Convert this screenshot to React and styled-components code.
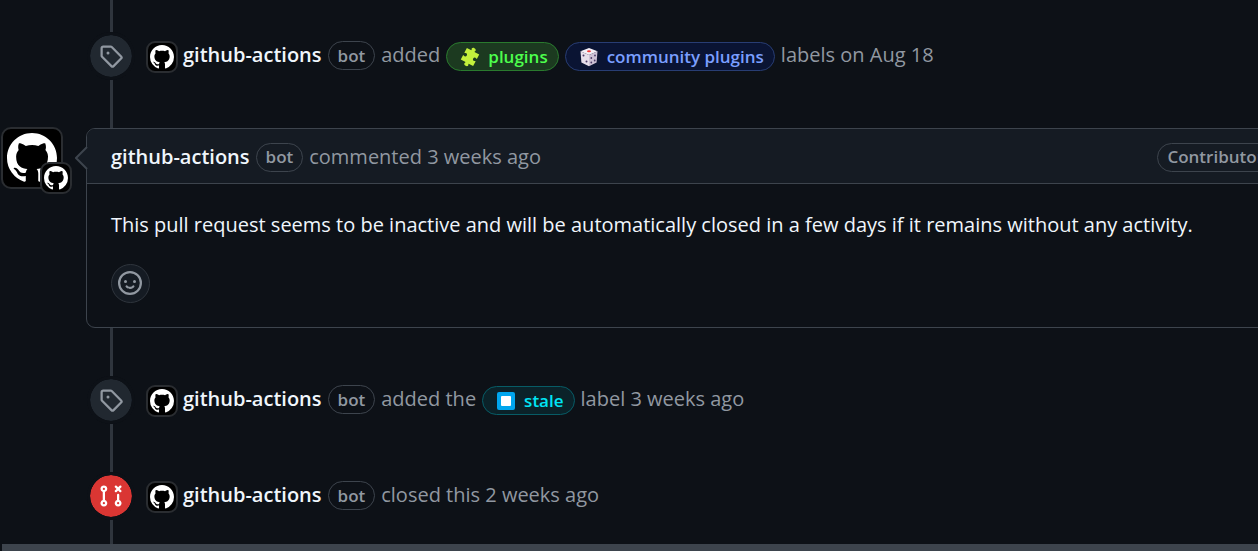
import React from 'react';
import styled, { createGlobalStyle } from 'styled-components';

const GlobalStyle = createGlobalStyle`
  * { box-sizing: border-box; }
  body {
    margin: 0;
    background: #0d1117;
    color: #f0f6fc;
    font: 400 20px/30px "Open Sans", "Noto Sans", sans-serif;
  }
`;

const paths = {
  tag: 'M1 7.775V2.75C1 1.784 1.784 1 2.75 1h5.025c.464 0 .91.184 1.238.513l6.25 6.25a1.75 1.75 0 0 1 0 2.474l-5.026 5.026a1.75 1.75 0 0 1-2.474 0l-6.25-6.25A1.752 1.752 0 0 1 1 7.775Zm1.5 0c0 .066.026.13.073.177l6.25 6.25a.25.25 0 0 0 .354 0l5.025-5.025a.25.25 0 0 0 0-.354l-6.25-6.25a.25.25 0 0 0-.177-.073H2.75a.25.25 0 0 0-.25.25ZM6 5a1 1 0 1 1 0 2 1 1 0 0 1 0-2Z',
  github: 'M8 0c4.42 0 8 3.58 8 8a8.013 8.013 0 0 1-5.45 7.59c-.4.08-.55-.17-.55-.38 0-.27.01-1.13.01-2.2 0-.75-.25-1.23-.54-1.48 1.78-.2 3.65-.88 3.65-3.95 0-.88-.31-1.59-.82-2.15.08-.2.36-1.02-.08-2.12 0 0-.67-.22-2.2.82-.64-.18-1.32-.27-2-.27-.68 0-1.36.09-2 .27-1.53-1.03-2.2-.82-2.2-.82-.44 1.1-.16 1.92-.08 2.12-.51.56-.82 1.28-.82 2.15 0 3.06 1.86 3.75 3.64 3.95-.23.2-.44.55-.51 1.07-.46.21-1.61.55-2.33-.66-.15-.24-.6-.83-1.23-.82-.67.01-.27.38.01.53.34.19.73.9.82 1.13.16.45.68 1.31 2.69.94 0 .67.01 1.3.01 1.49 0 .21-.15.45-.55.38A7.995 7.995 0 0 1 0 8c0-4.42 3.58-8 8-8Z',
  smiley: 'M8 0a8 8 0 1 1 0 16A8 8 0 0 1 8 0ZM1.5 8a6.5 6.5 0 1 0 13 0 6.5 6.5 0 0 0-13 0Zm3.82 1.636a.75.75 0 0 1 1.038.175l.007.009c.103.118.22.222.35.31.264.178.683.37 1.285.37.602 0 1.02-.192 1.285-.371.13-.088.247-.192.35-.31l.007-.008a.75.75 0 0 1 1.222.87c-.2.27-.45.5-.735.673-.63.418-1.37.638-2.127.629-.946 0-1.652-.308-2.126-.63a3.331 3.331 0 0 1-.735-.685.75.75 0 0 1 .183-1.044ZM12 7a1 1 0 1 1-2 0 1 1 0 0 1 2 0ZM5 8a1 1 0 1 1 0-2 1 1 0 0 1 0 2Z',
  closed: 'M3.25 1A2.25 2.25 0 0 1 4 5.372v5.256a2.251 2.251 0 1 1-1.5 0V5.372A2.251 2.251 0 0 1 3.25 1Zm9.5 5.5a.75.75 0 0 1 .75.75v3.378a2.251 2.251 0 1 1-1.5 0V7.25a.75.75 0 0 1 .75-.75Zm-2.03-5.273a.75.75 0 0 1 1.06 0l.97.97.97-.97a.748.748 0 0 1 1.265.332.75.75 0 0 1-.205.729l-.97.97.97.97a.751.751 0 0 1-.018 1.042.751.751 0 0 1-1.042.018l-.97-.97-.97.97a.749.749 0 0 1-1.275-.326.749.749 0 0 1 .215-.734l.97-.97-.97-.97a.75.75 0 0 1 0-1.06ZM2.5 3.25a.75.75 0 1 0 1.5 0 .75.75 0 0 0-1.5 0ZM3.25 12a.75.75 0 1 0 0 1.5.75.75 0 0 0 0-1.5Zm9.5 0a.75.75 0 1 0 0 1.5.75.75 0 0 0 0-1.5Z',
};

const Icon = ({ name, size = 24 }) => (
  <svg width={size} height={size} viewBox="0 0 16 16" fill="currentColor" aria-hidden="true">
    <path d={paths[name]} />
  </svg>
);

const Page = styled.main`
  overflow: hidden;
`;

const Timeline = styled.div`
  padding-top: 8px;
  background: linear-gradient(#2f353d, #2f353d) 110px 0 / 3px 100% no-repeat;
`;

const Event = styled.div`
  display: flex;
  align-items: center;
  padding: 24px 0 24px 87px;
`;

const EventBadge = styled.span`
  display: flex;
  align-items: center;
  justify-content: center;
  flex: none;
  width: 48px;
  height: 48px;
  margin-right: 11px;
  border: 3px solid #0d1117;
  border-radius: 50%;
  background: ${(p) => (p.$closed ? '#da3633' : '#212830')};
  background-clip: padding-box;
  outline: 3px solid #0d1117;
  outline-offset: -3px;
  color: ${(p) => (p.$closed ? '#ffffff' : '#9198a1')};
`;

const EventText = styled.div`
  display: flex;
  align-items: flex-start;
  gap: 6px;
  padding-top: 2px;
  color: #9198a1;
  line-height: 28px;
  white-space: nowrap;
`;

const Avatar = styled.a`
  display: flex;
  align-items: center;
  justify-content: center;
  flex: none;
  width: ${(p) => p.$size}px;
  height: ${(p) => p.$size}px;
  border: 2px solid #2a2d31;
  border-radius: ${(p) => (p.$size > 40 ? 10 : 9)}px;
  background: #000000;
  color: #ffffff;
`;

const Actor = styled.span`
  display: flex;
  align-items: flex-start;
  gap: 5px;
`;

const AuthorLink = styled.a`
  color: #f0f6fc;
  font-weight: 600;
  text-decoration: none;
`;

const Pill = styled.span`
  display: inline-flex;
  align-items: center;
  height: 29px;
  padding: 0 9px;
  border: 1px solid #3d444d;
  border-radius: 15px;
  color: #9198a1;
  font-size: 17px;
  font-weight: 600;
`;

const labelTones = {
  green: { text: '#4dff4d', fill: '#1c3a20', line: '#2a7a2e' },
  blue: { text: '#7a9fff', fill: '#0a1433', line: '#283d73' },
  cyan: { text: '#00e5f5', fill: '#0b2229', line: '#075c66' },
};

const Label = styled.a`
  display: inline-flex;
  align-items: center;
  gap: 8px;
  height: 29px;
  margin-top: 1px;
  padding: 0 10px 0 13px;
  border: 1px solid ${(p) => labelTones[p.$tone].line};
  border-radius: 15px;
  background: ${(p) => labelTones[p.$tone].fill};
  color: ${(p) => labelTones[p.$tone].text};
  font-size: 17px;
  font-weight: 600;
  text-decoration: none;
`;

const Comment = styled.div`
  display: flex;
  align-items: flex-start;
  margin: 24px -41px 24px 0;
`;

const CommentAvatars = styled.div`
  position: relative;
  flex: none;
  width: 86px;
  padding-left: 1px;
  margin-top: -1px;
`;

const AppAvatar = styled.div`
  position: absolute;
  top: 35px;
  left: 40px;
`;

const Card = styled.article`
  position: relative;
  flex: 1;
  border: 1px solid #3d444d;
  border-radius: 9px;
  background: #0d1117;
`;

const Caret = styled.svg`
  position: absolute;
  top: 17px;
  left: -12px;
`;

const CardHeader = styled.header`
  display: flex;
  align-items: center;
  gap: 6px;
  height: 55px;
  padding: 2px 24px 0;
  border-bottom: 1px solid #3d444d;
  border-radius: 8px 8px 0 0;
  background: #151b23;
  color: #9198a1;
`;

const Role = styled(Pill)`
  margin-left: auto;
`;

const CardBody = styled.div`
  padding: 24px;
`;

const Message = styled.p`
  margin: 0 0 22px;
  line-height: 34px;
  white-space: nowrap;
`;

const ReactionButton = styled.button`
  display: flex;
  align-items: center;
  justify-content: center;
  width: 39px;
  height: 39px;
  padding: 0 1px 1px 0;
  border: 1px solid #2f353d;
  border-radius: 50%;
  background: #151b23;
  color: #9198a1;
`;

const Footer = styled.div`
  height: 7px;
  margin-left: 2px;
  background: #3d444d;
`;

const Puzzle = () => (
  <svg width="20" height="20" viewBox="0 0 20 20" aria-hidden="true">
    <g transform="rotate(-62 10 10)">
      <path
        fill="#c3ef3c"
        d="M3.500 3h4.500c.6 0 .7.500.4.900-.9 1.200-.2 2.600 1.400 2.600s2.300-1.400 1.400-2.600c-.3-.4-.2-.9.400-.9H16.500v4.500c0 .6.500.7.900.4 1-.7 2.400-.1 2.400 1.900s-1.400 2.600-2.400 1.900c-.4-.3-.9-.2-.9.400V17h-4.500c-.6 0-.7-.5-.4-.9.9-1.200.2-2.600-1.400-2.600s-2.300 1.400-1.400 2.600c.3.400.2.900-.4.900H3.500v-4.500c0-.6-.5-.7-.9-.4-1 .7-2.400.1-2.400-1.900s1.400-2.600 2.400-1.900c.4.300.9.200.9-.4Z"
      />
    </g>
  </svg>
);

const Die = () => (
  <svg width="20" height="20" viewBox="0 0 20 20" aria-hidden="true">
    <path fill="#f4eff6" d="M10 1 18.500 4.300 10 8 1.500 4.300Z" />
    <path fill="#e6deea" d="M1.500 4.300 10 8v11.200L2.400 15.500Z" />
    <path fill="#cdc2d6" d="M18.500 4.300 10 8v11.200l7.600-3.700Z" />
    <ellipse cx="10" cy="4.200" rx="2" ry="1" fill="#ee3b3b" />
    <g fill="#4a3a66">
      <circle cx="4.500" cy="8.500" r="1" /><circle cx="7.500" cy="14.500" r="1" />
      <circle cx="12.300" cy="11" r=".9" /><circle cx="16" cy="8.500" r=".9" />
      <circle cx="12.300" cy="15.500" r=".9" /><circle cx="15.700" cy="13.500" r=".9" />
    </g>
  </svg>
);

const StopSquare = () => (
  <svg width="20" height="20" viewBox="0 0 20 20" aria-hidden="true">
    <rect x="1" y="1" width="18" height="18" rx="2" fill="#00a6ed" />
    <rect x="5" y="5" width="10" height="10" rx="1" fill="#ffffff" />
  </svg>
);

const BotAvatar = ({ size = 32, icon = 24 }) => (
  <Avatar href="#github-actions" aria-label="github-actions" $size={size}>
    <Icon name="github" size={icon} />
  </Avatar>
);

const TimelineEvent = ({ icon, closed, children }) => (
  <Event>
    <EventBadge $closed={closed}><Icon name={icon} /></EventBadge>
    <EventText>
      <Actor>
        <BotAvatar />
        <AuthorLink href="#github-actions">github-actions</AuthorLink>
      </Actor>
      <Pill>bot</Pill>
      {children}
    </EventText>
  </Event>
);

export default function App() {
  return (
    <Page>
      <GlobalStyle />
      <Timeline>
        <TimelineEvent icon="tag">
          <span>added</span>
          <Label href="#plugins" $tone="green"><Puzzle />plugins</Label>
          <Label href="#community-plugins" $tone="blue"><Die />community plugins</Label>
          <span>labels on Aug 18</span>
        </TimelineEvent>
        <Comment>
          <CommentAvatars>
            <BotAvatar size={62} icon={50} />
            <AppAvatar><BotAvatar /></AppAvatar>
          </CommentAvatars>
          <Card>
            <CardHeader>
              <AuthorLink href="#github-actions">github-actions</AuthorLink>
              <Pill>bot</Pill>
              <span>commented 3 weeks ago</span>
              <Role>Contributor</Role>
            </CardHeader>
            <Caret width="13" height="24" viewBox="0 0 13 24" aria-hidden="true">
              <path d="M13 0 1 12l12 12Z" fill="#151b23" />
              <path d="M12 1 1 12l11 11" fill="none" stroke="#3d444d" strokeWidth="2" />
            </Caret>
            <CardBody>
              <Message>
                This pull request seems to be inactive and will be automatically closed in a few days if it remains without any activity.
              </Message>
              <ReactionButton type="button" aria-label="Add reaction"><Icon name="smiley" /></ReactionButton>
            </CardBody>
          </Card>
        </Comment>
        <TimelineEvent icon="tag">
          <span>added the</span>
          <Label href="#stale" $tone="cyan"><StopSquare />stale</Label>
          <span>label 3 weeks ago</span>
        </TimelineEvent>
        <TimelineEvent icon="closed" closed>
          <span>closed this 2 weeks ago</span>
        </TimelineEvent>
      </Timeline>
      <Footer />
    </Page>
  );
}
